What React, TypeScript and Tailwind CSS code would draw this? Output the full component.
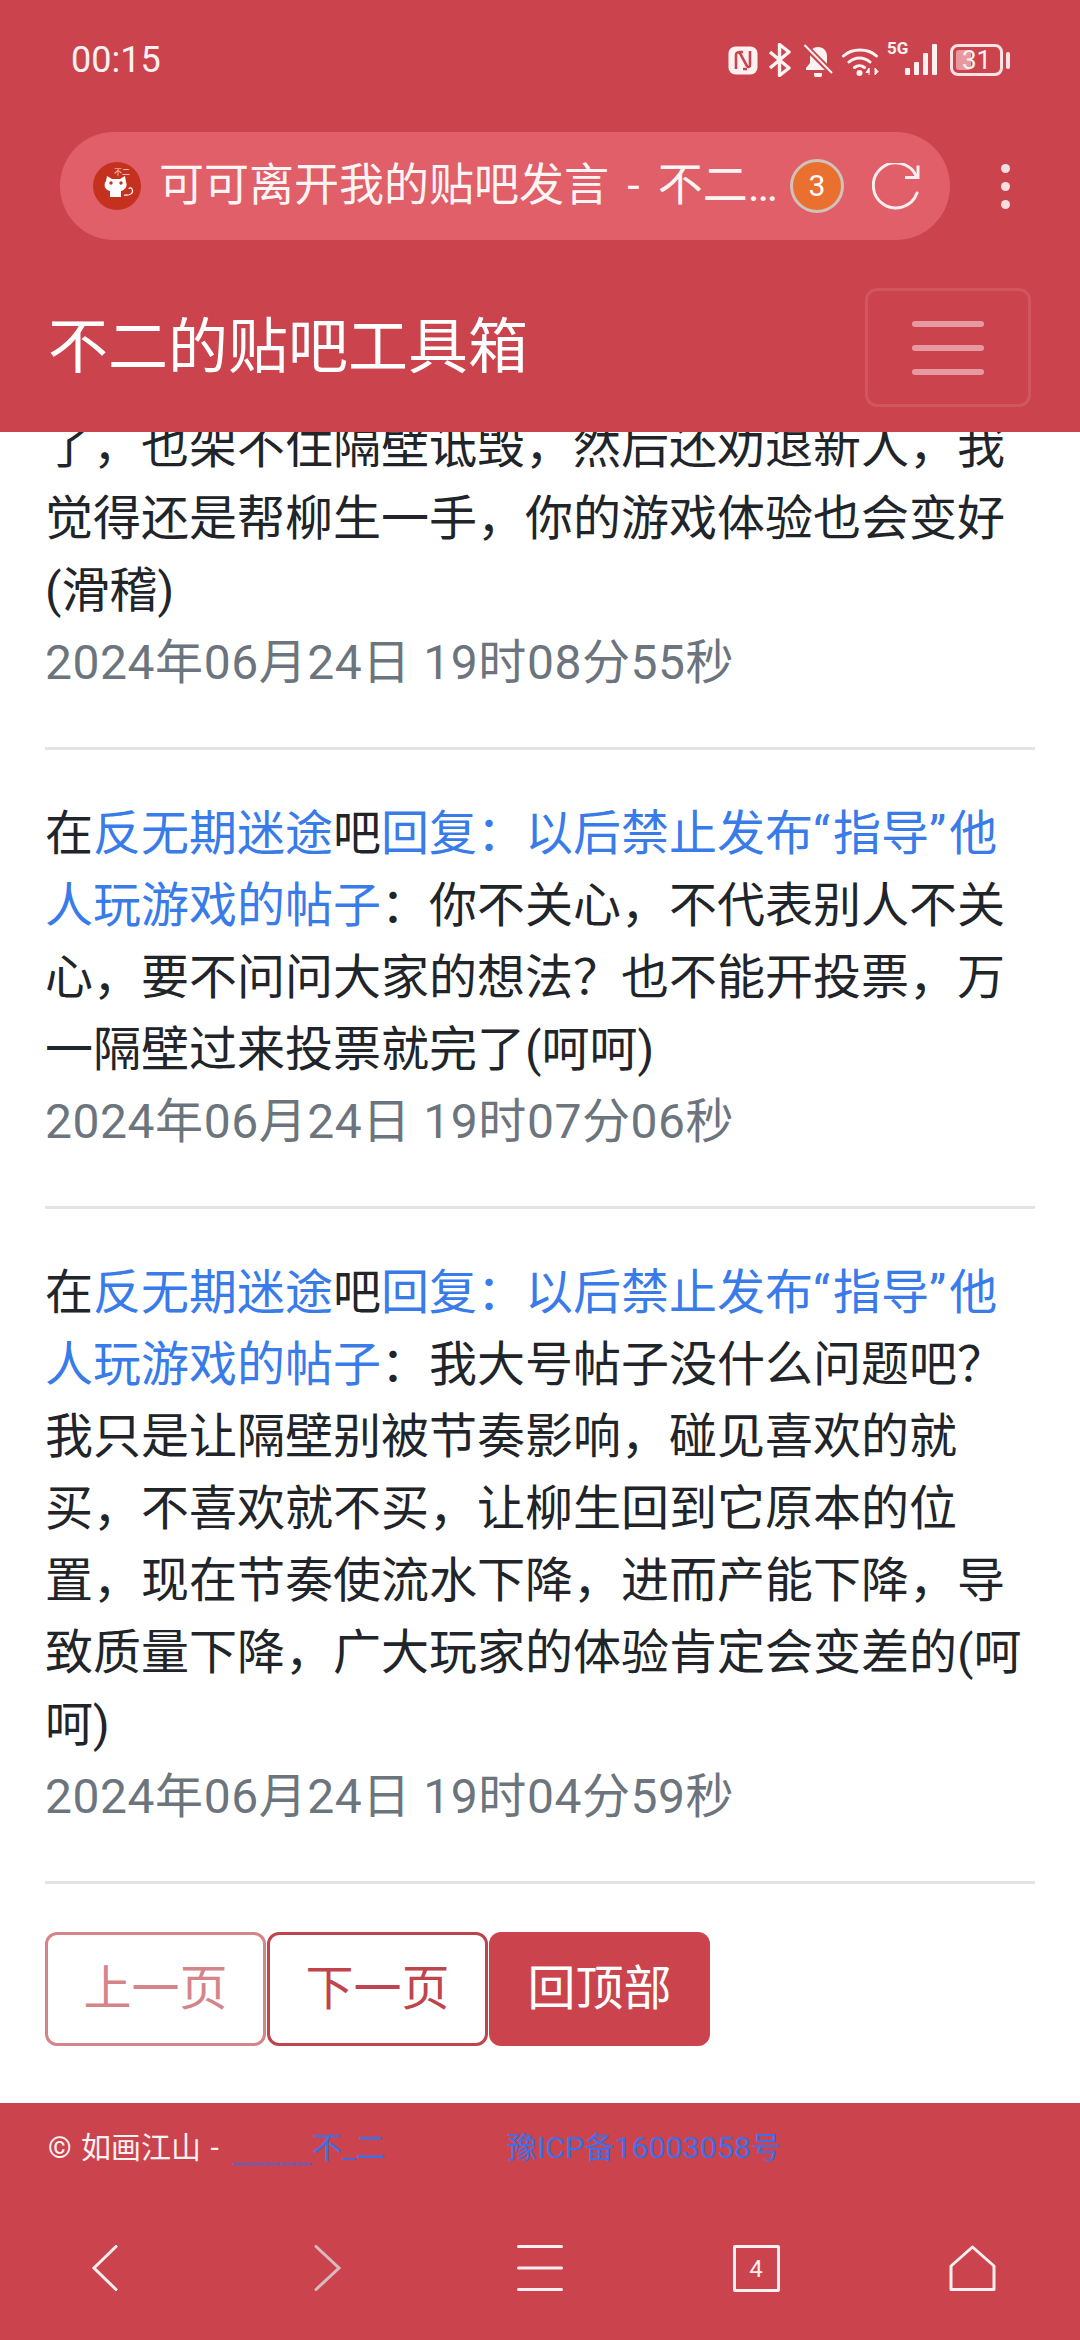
import React, { ReactNode } from 'react'

const dateClass = "text-[#6c757d] tracking-[0.55px]"
const linkClass = "text-[#3a7bea]"

const Nfc = () => (
  <svg width="30" height="29" viewBox="0 0 30 29">
    <rect x="0.5" y="0.5" width="29" height="28" rx="7" fill="#fdf1f2" />
    <path d="M8 23V8.5a2.2 2.2 0 0 1 4-1.2L19 20a1.6 1.6 0 0 0 3-1V5" fill="none" stroke="#cb444d" strokeWidth="2.6" />
    <path d="M11 6h4M15 23h4" stroke="#cb444d" strokeWidth="2.4" />
  </svg>
)

const Bluetooth = () => (
  <svg width="24" height="34" viewBox="0 0 24 34" className="ml-[10px]">
    <path d="M2 9l19 16-9.5 7.5V1.5L21 9 2 25" fill="none" stroke="#fdf1f2" strokeWidth="3.4" strokeLinejoin="round" />
  </svg>
)

const BellOff = () => (
  <svg width="30" height="33" viewBox="0 0 30 33" className="ml-[11px]">
    <path d="M15 3c-5.5 0-8 4-8 9v7l-4 5v2h22v-2l-1-2V12c0-5-3.500-9-9-9z" fill="#fdf1f2" />
    <path d="M11 29h8v1.500a3 2.500 0 0 1-8 0z" fill="#fdf1f2" />
    <path d="M1 1l28 28" stroke="#cb444d" strokeWidth="6" />
    <path d="M1.500 1l27.500 28" stroke="#fdf1f2" strokeWidth="2" />
  </svg>
)

const Wifi = () => (
  <svg width="37" height="31" viewBox="0 0 37 31" className="ml-[9px]">
    <path d="M1.500 11C10 3 26 3 34.500 11M7 17c6-5.500 15-5.500 21 0M12.500 22.500c3-2.500 7-2.500 10 0" fill="none" stroke="#fdf1f2" strokeWidth="3" strokeLinecap="round" />
    <circle cx="17.500" cy="28" r="3" fill="#fdf1f2" />
    <path d="M27 23l-3 4.500h3zM27 23v7M33 23v7l3-3.500z" fill="#fdf1f2" stroke="#fdf1f2" strokeWidth="1" />
  </svg>
)

const Signal = () => (
  <svg width="32" height="31" viewBox="0 0 32 31">
    <rect x="0" y="24" width="5" height="7" rx="1" fill="#fdf1f2" />
    <rect x="9" y="18" width="5" height="13" rx="1" fill="#fdf1f2" />
    <rect x="18" y="9" width="5" height="22" rx="1" fill="#fdf1f2" />
    <rect x="27" y="0" width="5" height="31" rx="1" fill="#fdf1f2" />
  </svg>
)

const Battery = () => (
  <div className="ml-[13px] relative w-[53px] h-[32px] rounded-[8px] border-[3px] border-[#fbe3e5] flex items-center justify-center">
    <div className="absolute left-[3px] top-[3px] bottom-[3px] w-[15px] rounded-[3px] bg-[#e69aa0]" />
    <span className="relative text-[26px] leading-none text-[#fdf1f2]">31</span>
  </div>
)

const CatIcon = () => (
  <svg width="48" height="48" viewBox="0 0 48 48" className="shrink-0">
    <circle cx="24" cy="24" r="24" fill="#c4321f" />
    <path d="M13 19l1-5 5 3h8l5-3 1 6c2 4-1 8-5 9v6h-11v-6c-5-1-7-6-4-10z" fill="#fff" />
    <circle cx="18" cy="21" r="1.700" fill="#c4321f" />
    <circle cx="28" cy="21" r="1.700" fill="#c4321f" />
    <path d="M31 33c6 1 10-2 8-6-1-2-3-1-3 0" fill="none" stroke="#fff" strokeWidth="1.200" />
    <text x="21" y="13" fontSize="8" fill="#f6d6d0">不二</text>
  </svg>
)

const Reload = () => (
  <svg width="48" height="47" viewBox="0 0 48 47" className="ml-[28px] shrink-0">
    <path d="M44 12.500A22.500 22.500 0 1 0 45 30" fill="none" stroke="#fbeeef" strokeWidth="3" strokeLinecap="round" />
    <path d="M33 14.500l13 0 0-12" fill="none" stroke="#fbeeef" strokeWidth="3" />
  </svg>
)

const Post = ({ title, text, date }: { title: ReactNode, text: string, date: string }) => (
  <div className="mb-[48px]">
    <p>
      在<a className={linkClass}>反无期迷途</a>吧<a className={linkClass}>回复：{title}</a>：{text}
    </p>
    <p className={dateClass}>{date}</p>
  </div>
)

const Divider = () => <hr className="border-0 h-[3px] bg-[#e3e3e3] mb-[48px]" />

const threadTitle = (
  <>以后禁止发布<span className="tracking-[3px]">“</span>指导<span className="tracking-[3px]">”</span>他人玩游戏的帖子</>
)

export default function App() {
  return (
    <div className="w-[1080px] h-[2340px] flex flex-col overflow-hidden bg-white font-[Roboto,'Noto_Sans_CJK_SC',sans-serif]">
      <header className="bg-[#cb444d] h-[432px] shrink-0 z-10 relative">
        <div className="h-[120px] flex items-center justify-between pl-[71px] pr-[70px]">
          <span className="text-[36px] text-[#fdf1f2]">00:15</span>
          <div className="flex items-center">
            <Nfc />
            <Bluetooth />
            <BellOff />
            <Wifi />
            <div className="relative ml-[8px] mt-[-2px] w-[50px] h-[31px]">
              <span className="absolute left-0 top-[-4px] text-[17px] font-bold leading-none text-[#fdf1f2]">5G</span>
              <div className="absolute left-[18px] top-0"><Signal /></div>
            </div>
            <Battery />
            <div className="w-[4px] h-[17px] ml-[3px] rounded-full bg-[#fbe3e5]" />
          </div>
        </div>

        <div className="mt-[12px] h-[108px] flex items-center">
          <div className="ml-[60px] w-[890px] h-[108px] rounded-full bg-[#e05f68] flex items-center pl-[33px]">
            <CatIcon />
            <div className="ml-[18px] w-[624px] truncate text-[45px] leading-[60px] [word-spacing:7px] text-[#fdf4f4]">可可离开我的贴吧发言 - 不二的贴吧工具箱</div>
            <div className="ml-[7px] w-[54px] h-[54px] shrink-0 rounded-full bg-[#ea7030] border-[3px] border-[#cfc2bd] flex items-center justify-center text-[30px] leading-none text-white">3</div>
            <Reload />
          </div>
          <div className="ml-[51px] flex flex-col gap-[9px]">
            <div className="w-[9px] h-[9px] rounded-full bg-[#f3dfe0]" />
            <div className="w-[9px] h-[9px] rounded-full bg-[#f3dfe0]" />
            <div className="w-[9px] h-[9px] rounded-full bg-[#f3dfe0]" />
          </div>
        </div>

        <div className="mt-[48px] h-[119px] flex items-center justify-between pl-[48px] pr-[49px]">
          <span className="text-[60px] leading-[72px] text-white">不二的贴吧工具箱</span>
          <div className="w-[166px] h-[119px] rounded-[12px] border-[3px] border-[#d2565f] flex flex-col items-center justify-center gap-[18px]">
            <div className="w-[72px] h-[6px] rounded-full bg-[#e69aa0]" />
            <div className="w-[72px] h-[6px] rounded-full bg-[#e69aa0]" />
            <div className="w-[72px] h-[6px] rounded-full bg-[#e69aa0]" />
          </div>
        </div>
      </header>

      <main className="flex-1 overflow-hidden px-[45px] text-[48px] leading-[72px] text-[#212529]">
        <div className="mt-[-21px]">
          <div className="mb-[48px]">
            <p>了，也架不住隔壁诋毁，然后还劝退新人，我觉得还是帮柳生一手，你的游戏体验也会变好(滑稽)</p>
            <p className={dateClass}>2024年06月24日 19时08分55秒</p>
          </div>
          <Divider />
          <Post
            title={threadTitle}
            text="你不关心，不代表别人不关心，要不问问大家的想法？也不能开投票，万一隔壁过来投票就完了(呵呵)"
            date="2024年06月24日 19时07分06秒"
          />
          <Divider />
          <Post
            title={threadTitle}
            text="我大号帖子没什么问题吧？我只是让隔壁别被节奏影响，碰见喜欢的就买，不喜欢就不买，让柳生回到它原本的位置，现在节奏使流水下降，进而产能下降，导致质量下降，广大玩家的体验肯定会变差的(呵呵)"
            date="2024年06月24日 19时04分59秒"
          />
          <Divider />
          <div className="flex gap-px">
            <button className="w-[221px] h-[114px] rounded-[12px] border-[3px] border-[#d5848a] text-[#d5848a]">上一页</button>
            <button className="w-[221px] h-[114px] rounded-[12px] border-[3px] border-[#c0444d] text-[#c0444d]">下一页</button>
            <button className="w-[221px] h-[114px] rounded-[12px] bg-[#cb444d] text-white">回顶部</button>
          </div>
        </div>
      </main>

      <footer className="bg-[#cb444d] h-[237px] shrink-0">
        <div className="h-[90px] flex items-center pl-[48px] text-[30px] leading-none text-[#fdf1f2]">
          <span className="w-[185px] whitespace-pre [word-spacing:2px]">© 如画江山 - </span>
          <a className="w-[274px] text-[#3f6fe6]"><span className="font-['DejaVu_Sans'] tracking-[0.8px] text-[#5763c8]">_____</span>不<span className="text-[#5763c8]">_</span>二</a>
          <a className="text-[#3f6fe6] tracking-[0.2px]">豫ICP备16003058号</a>
        </div>
        <div className="grid grid-cols-5 justify-items-center pt-[52px]">
          <svg width="46" height="46" viewBox="0 0 46 46">
            <path d="M31 1.500L9 23l22 21.500" fill="none" stroke="#fdeeef" strokeWidth="3" strokeLinecap="round" />
          </svg>
          <svg width="46" height="46" viewBox="0 0 46 46">
            <path d="M15 1.500L38 23 15 44.500" fill="none" stroke="#d6bcbf" strokeWidth="3" strokeLinecap="round" />
          </svg>
          <svg width="46" height="46" viewBox="0 0 46 46">
            <path d="M1.500 1.500h43M1.500 23h43M1.500 44.500h43" fill="none" stroke="#fdeeef" strokeWidth="3" strokeLinecap="round" />
          </svg>
          <div className="w-[47px] h-[47px] border-[3px] border-[#fdeeef] rounded-[2px] flex items-center justify-center text-[24px] leading-none text-[#fdeeef]">4</div>
          <svg width="47" height="46" viewBox="0 0 47 46">
            <path d="M23.500 2L45 21v23.500H2V21z" fill="none" stroke="#fdeeef" strokeWidth="3" strokeLinejoin="round" />
          </svg>
        </div>
      </footer>
    </div>
  )
}
